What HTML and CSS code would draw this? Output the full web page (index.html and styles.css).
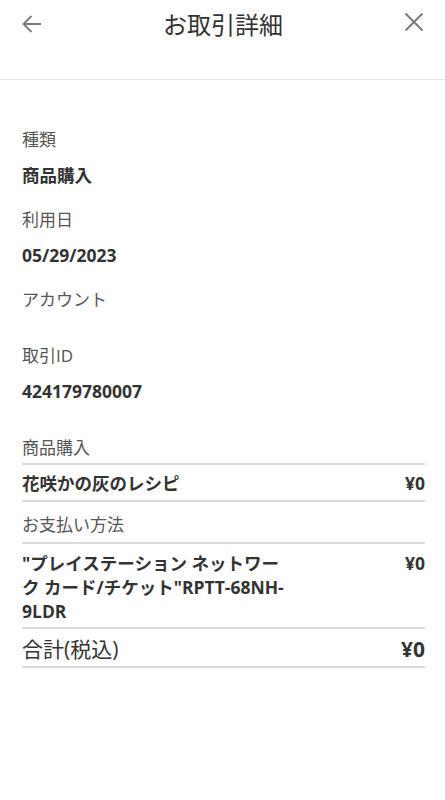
FILE: index.html
```html
<!DOCTYPE html>
<html lang="ja">
<head>
<meta charset="utf-8">
<title>お取引詳細</title>
<link rel="stylesheet" href="styles.css">
</head>
<body>
<header class="header">
  <div class="header-row">
    <span class="icon icon-back">
      <svg width="20" height="20" viewBox="0 0 20 20"><path d="M19 10H1.5M9.5 2L1.5 10l8 8" fill="none" stroke="#7a7a7a" stroke-width="1.8"/></svg>
    </span>
    <h1 class="title">お取引詳細</h1>
    <span class="icon icon-close">
      <svg width="20" height="20" viewBox="0 0 20 20"><path d="M1.5 1.5L18.5 18.5M18.5 1.5L1.5 18.5" fill="none" stroke="#7a7a7a" stroke-width="1.9"/></svg>
    </span>
  </div>
</header>
<main class="content">
  <div class="field">
    <div class="label">種類</div>
    <div class="value">商品購入</div>
  </div>
  <div class="field">
    <div class="label">利用日</div>
    <div class="value">05/29/2023</div>
  </div>
  <div class="field">
    <div class="label">アカウント</div>
  </div>
  <div class="field">
    <div class="label">取引ID</div>
    <div class="value">424179780007</div>
  </div>
  <section class="section">
    <div class="section-label">商品購入</div>
    <div class="row">
      <div class="row-name">花咲かの灰のレシピ</div>
      <div class="row-amount">¥0</div>
    </div>
    <div class="section-label section-label-next">お支払い方法</div>
    <div class="row row-pay">
      <div class="row-name row-name-wrap">"プレイステーション ネットワーク カード/チケット"RPTT-68NH-9LDR</div>
      <div class="row-amount">¥0</div>
    </div>
    <div class="row row-total">
      <div class="total-name">合計(税込)</div>
      <div class="total-amount">¥0</div>
    </div>
  </section>
</main>
</body>
</html>
```
FILE: styles.css
```css
* { box-sizing: border-box; }
html, body { margin: 0; padding: 0; background: #fff; }
body {
  font-family: "Open Sans", "Noto Sans CJK JP", sans-serif;
  color: #333;
  width: 445px;
}
.header {
  height: 80px;
  border-bottom: 1px solid #e8e8e8;
  padding: 0 21px 0 22px;
}
.header-row {
  height: 48px;
  display: flex;
  align-items: center;
  justify-content: space-between;
}
.icon { width: 20px; height: 20px; display: flex; }
.icon-close { margin-top: -4px; }
.title {
  margin: 0;
  font-size: 24px;
  font-weight: 400;
  color: #333;
  line-height: 30px;
  margin-top: 2px;
}
.content {
  display: flex;
  flex-direction: column;
  padding: 48px 20px 0 22px;
}
.field {
  display: flex;
  flex-direction: column;
  margin-bottom: 21px;
}
.label {
  font-size: 17px;
  line-height: 24px;
  color: #555;
  margin-bottom: 11px;
}
.value {
  font-size: 17.5px;
  line-height: 24px;
  font-weight: 700;
  color: #333;
}
.section {
  display: flex;
  flex-direction: column;
  margin-top: 12px;
}
.section-label {
  font-size: 17px;
  line-height: 24px;
  color: #555;
  padding-bottom: 3px;
  border-bottom: 2px solid #dadada;
}
.section-label-next { padding-top: 11px; padding-bottom: 5px; }
.row {
  display: flex;
  justify-content: space-between;
  align-items: flex-start;
  padding: 6px 0 5px;
  border-bottom: 2px solid #dadada;
  font-size: 17.5px;
  line-height: 24px;
  font-weight: 700;
  color: #333;
}
.row-pay { padding: 7px 0 4px; }
.row-name-wrap { width: 264px; }
.row-amount { text-align: right; }
.row-total {
  padding: 6px 0 3px;
  font-size: 21px;
  line-height: 28px;
}
.total-name { font-weight: 400; color: #333; }
.total-amount { font-weight: 700; }
```
